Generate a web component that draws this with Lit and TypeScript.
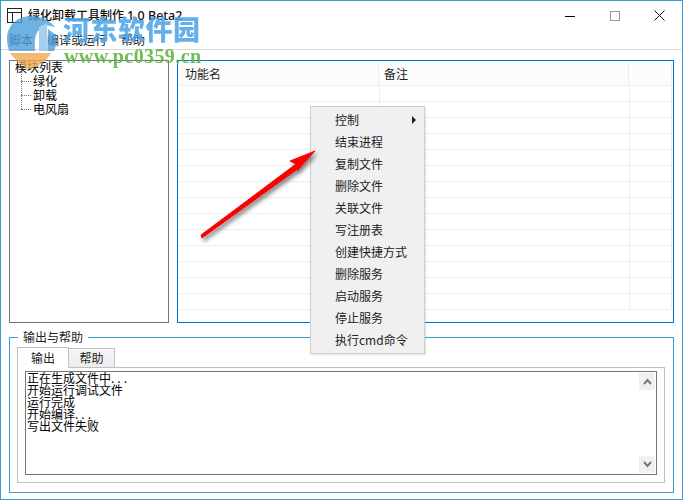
import { LitElement, html, css } from "lit";
import { customElement } from "lit/decorators.js";

const MENU = ["控制","结束进程","复制文件","删除文件","关联文件","写注册表","创建快捷方式","删除服务","启动服务","停止服务","执行cmd命令"];
const LOG = ["正在生成文件中|...","开始运行调试文件|","运行完成|","开始编译|...","写出文件失败|"];

@customElement("app-root")
export class AppRoot extends LitElement {
  static styles = css`
    :host { display: block; width: 683px; height: 500px; font-family: "Noto Sans CJK SC", "Liberation Sans", sans-serif; font-size: 12px; color: #000; }
    * { box-sizing: border-box; }
    .win { position: relative; width: 683px; height: 500px; border: 1px solid #3a9ad4; background: #fff; display: flex; flex-direction: column; overflow: hidden; }
    .title { height: 29px; flex: none; display: flex; align-items: flex-start; padding: 7px 0 0 6px; gap: 6px; }
    .appicon { width: 15px; height: 15px; flex: none; }
    .title-text { font-size: 12px; line-height: 14px; font-weight: 500; color: #111; flex: 1; white-space: nowrap; }
    .title-ver { font-family: "Noto Sans", sans-serif; font-size: 12.5px; font-weight: 500; margin-left: 3px; }
    .sys { display: flex; width: 134px; height: 29px; align-items: center; margin-top: -7px; }
    .sys div { flex: 1; display: flex; justify-content: center; }
    .menubar { height: 20px; flex: none; display: flex; gap: 14px; align-items: center; padding-left: 8px; border-bottom: 1px solid #d8d8d8; color: #222; }
    .main { flex: none; display: flex; gap: 8px; padding: 10px 0 0 8px; height: 273px; }
    .tree { width: 160px; height: 263px; border: 1px solid #767676; padding: 0 0 0 5px; line-height: 14px; }
    .tree-root { height: 14px; margin-top: -1px; }
    .tree-item { position: relative; height: 14px; padding-left: 18px; }
    .tree-item::before { content: ""; position: absolute; left: 6px; top: -7px; height: 14px; border-left: 1px dotted #777; }
    .tree-item::after { content: ""; position: absolute; left: 6px; top: 7px; width: 10px; border-top: 1px dotted #777; }
    .table { width: 497px; height: 263px; border: 1px solid #0078d7; display: flex; flex-direction: column; padding: 1px; overflow: hidden; }
    .thead { display: grid; grid-template-columns: 200px 250px 1fr; height: 24px; background: #fcfcfc; border-bottom: 1px solid #e6f0fa; flex: none; }
    .th { padding: 0 0 0 6px; border-right: 1px solid #e6f0fa; line-height: 24px; color: #222; }
    .th + .th { padding-left: 5px; }
    .rows { position: relative; flex: 1; display: flex; flex-direction: column; }
    .row { height: 16px; flex: none; border-bottom: 1px solid #eeeeee; display: grid; grid-template-columns: 201px 250px 1fr; }
    .row span { border-right: 1px solid #eeeeee; }
    .group { position: relative; margin: 14px 0 0 8px; width: 665px; height: 156px; border: 1px solid #3a9ad4; flex: none; padding: 8px 7px 0 7px; }
    .legend { position: absolute; left: 8px; top: -10px; padding: 0 5px; background: #fff; line-height: 17px; color: #222; }
    .tabs { display: flex; height: 21px; align-items: flex-end; }
    .tab { border: 1px solid #c0c0c0; border-bottom: none; display: flex; align-items: center; justify-content: center; color: #222; padding-bottom: 2px; }
    .tab.on { width: 52px; height: 21px; background: #fff; margin-bottom: -1px; position: relative; z-index: 1; }
    .tab.off { width: 47px; height: 19px; margin-left: -1px; background: linear-gradient(#f5f5f5, #ececec); padding-bottom: 1px; }
    .pane { width: 648px; height: 116px; border: 1px solid #c0c0c0; padding: 3px 7px; }
    .box { position: relative; width: 632px; height: 104px; border: 1px solid #767676; padding: 0 1px; line-height: 12px; }
    .box div.l { height: 12px; white-space: nowrap; }
    .dots { letter-spacing: 3px; }
    .sb { position: absolute; right: 1px; width: 16px; height: 17px; background: #f0f0f0; display: flex; align-items: center; justify-content: center; }
    .sb.up { top: 1px; } .sb.dn { bottom: 1px; }
    .menu { position: absolute; left: 309px; top: 105px; width: 115px; height: 248px; background: #f0f0f0; border: 1px solid #cfcfcf; padding: 2px 0; box-shadow: 1px 1px 2px rgba(0,0,0,.12); z-index: 3; }
    .mi { height: 22px; line-height: 22px; padding-left: 24px; position: relative; color: #222; }
    .mi i { position: absolute; right: 8px; top: 7px; width: 0; height: 0; border-left: 4px solid #222; border-top: 4px solid transparent; border-bottom: 4px solid transparent; }
    .arrow { position: absolute; left: 189px; top: 139px; z-index: 4; }
    .logo { position: absolute; left: 0; top: 13px; z-index: 5; opacity: .8; }
    .wm { position: absolute; left: 62px; top: 10px; z-index: 5; font-weight: 900; font-size: 27px; line-height: 36px; letter-spacing: .5px; color: #4fa6e8; opacity: .88; white-space: nowrap; }
    .wm2 { position: absolute; left: 63px; top: 44px; z-index: 5; font-family: "Liberation Serif", serif; font-weight: 700; font-size: 20px; line-height: 22px; letter-spacing: .4px; color: #5fb340; opacity: .88; white-space: nowrap; }
  `;

  render() {
    return html`<div class="win">
      <div class="title">
        <svg class="appicon" viewBox="0 0 15 15"><rect x=".5" y=".5" width="14" height="14" fill="#fff" stroke="#222"/><path d="M.5 4.500H14.500M5.500 4.500V14.500" stroke="#222"/></svg>
        <span class="title-text">绿化卸载工具制作<span class="title-ver">1.0 Beta2</span></span>
        <div class="sys">
          <div><svg width="10" height="10"><path d="M0 5.500H10" stroke="#000"/></svg></div>
          <div><svg width="10" height="10"><rect x=".5" y=".5" width="9" height="9" fill="none" stroke="#999"/></svg></div>
          <div><svg width="11" height="11"><path d="M.5 .5L10.500 10.500M10.500 .5L.5 10.500" stroke="#111" fill="none"/></svg></div>
        </div>
      </div>
      <div class="menubar"><span>脚本</span><span>编译或运行</span><span>帮助</span></div>
      <div class="main">
        <div class="tree">
          <div class="tree-root">模块列表</div>
          <div class="tree-item">绿化</div>
          <div class="tree-item">卸载</div>
          <div class="tree-item">电风扇</div>
        </div>
        <div class="table">
          <div class="thead"><div class="th">功能名</div><div class="th">备注</div><div class="th"></div></div>
          <div class="rows">${Array.from({ length: 14 }, () => html`<div class="row"><span></span><span></span><span></span></div>`)}</div>
        </div>
      </div>
      <div class="group">
        <div class="legend">输出与帮助</div>
        <div class="tabs"><div class="tab on">输出</div><div class="tab off">帮助</div></div>
        <div class="pane"><div class="box">
          ${LOG.map((l) => { const [t, d] = l.split("|"); return html`<div class="l">${t}<span class="dots">${d}</span></div>`; })}
          <div class="sb up"><svg width="9" height="7"><path d="M1 6L4.500 2L8 6" fill="none" stroke="#777" stroke-width="2"/></svg></div>
          <div class="sb dn"><svg width="9" height="7"><path d="M1 1L4.500 5L8 1" fill="none" stroke="#777" stroke-width="2"/></svg></div>
        </div></div>
      </div>
      <div class="menu">${MENU.map((m, i) => html`<div class="mi">${m}${i === 0 ? html`<i></i>` : ""}</div>`)}</div>
      <svg class="arrow" width="135" height="110" viewBox="190 140 135 110">
        <defs><filter id="s" x="-20%" y="-20%" width="140%" height="140%"><feDropShadow dx="2" dy="3" stdDeviation="2" flood-color="#000" flood-opacity=".5"/></filter></defs>
        <path filter="url(#s)" d="M315 151L290 161L296 164L201 235L202 238L299 168L297 171Z" fill="#f00" stroke="#e8100f" stroke-width="1" stroke-linejoin="round"/>
      </svg>
      <svg class="logo" width="62" height="58" viewBox="0 13 62 58">
        <path d="M6 38C6 24 17 15 30 15C40 15 48 19 54 26L44 24C37 30 33 30 34 50L8 50C7 46 6 42 6 38Z" fill="#4c9fdc"/>
        <path d="M38 26L46 22L47 50L38 50Z" fill="#8ec5ec"/>
        <path d="M47 28L55 34C56 40 55 46 53 50L47 50Z" fill="#4c9fdc"/>
        <path d="M9 52L50 52C46 60 36 67 26 68C21 64 14 59 9 52Z" fill="#f2a951"/>
      </svg>
      <div class="wm">河东软件园</div>
      <div class="wm2">www.pc0359.cn</div>
    </div>`;
  }
}
